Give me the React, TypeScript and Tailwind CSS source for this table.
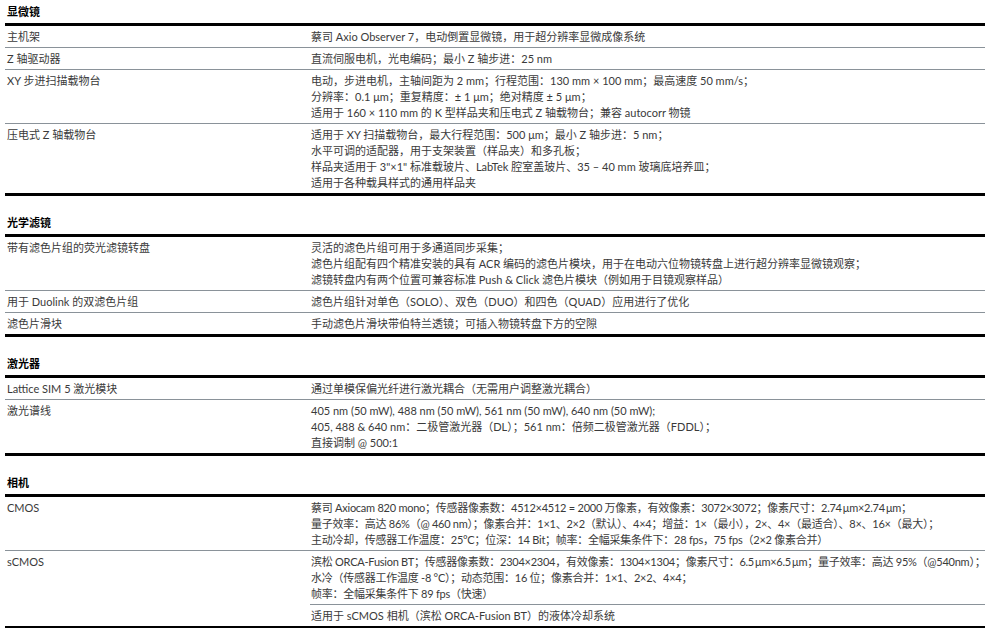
type Row = { label: string; lines: string[]; extra?: string };
type Section = { title: string; tight?: boolean; rows: Row[] };

const sections: Section[] = [
  {
    title: '显微镜',
    rows: [
      { label: '主机架', lines: ['蔡司 Axio Observer 7，电动倒置显微镜，用于超分辨率显微成像系统'] },
      { label: 'Z 轴驱动器', lines: ['直流伺服电机，光电编码；最小 Z 轴步进：25 nm'] },
      {
        label: 'XY 步进扫描载物台',
        lines: [
          '电动，步进电机，主轴间距为 2 mm；行程范围：130 mm × 100 mm；最高速度 50 mm/s；',
          '分辨率：0.1 μm；重复精度：± 1 μm；绝对精度 ± 5 μm；',
          '适用于 160 × 110 mm 的 K 型样品夹和压电式 Z 轴载物台；兼容 autocorr 物镜',
        ],
      },
      {
        label: '压电式 Z 轴载物台',
        lines: [
          '适用于 XY 扫描载物台，最大行程范围：500 μm；最小 Z 轴步进：5 nm；',
          '水平可调的适配器，用于支架装置（样品夹）和多孔板；',
          '样品夹适用于 3"×1" 标准载玻片、LabTek 腔室盖玻片、35 – 40 mm 玻璃底培养皿；',
          '适用于各种载具样式的通用样品夹',
        ],
      },
    ],
  },
  {
    title: '光学滤镜',
    rows: [
      {
        label: '带有滤色片组的荧光滤镜转盘',
        lines: [
          '灵活的滤色片组可用于多通道同步采集；',
          '滤色片组配有四个精准安装的具有 ACR 编码的滤色片模块，用于在电动六位物镜转盘上进行超分辨率显微镜观察；',
          '滤镜转盘内有两个位置可兼容标准 Push & Click 滤色片模块（例如用于目镜观察样品）',
        ],
      },
      { label: '用于 Duolink 的双滤色片组', lines: ['滤色片组针对单色（SOLO）、双色（DUO）和四色（QUAD）应用进行了优化'] },
      { label: '滤色片滑块', lines: ['手动滤色片滑块带伯特兰透镜；可插入物镜转盘下方的空隙'] },
    ],
  },
  {
    title: '激光器',
    rows: [
      { label: 'Lattice SIM 5 激光模块', lines: ['通过单模保偏光纤进行激光耦合（无需用户调整激光耦合）'] },
      {
        label: '激光谱线',
        lines: [
          '405 nm (50 mW), 488 nm (50 mW), 561 nm (50 mW), 640 nm (50 mW);',
          '405, 488 & 640 nm：二极管激光器（DL）；561 nm：倍频二极管激光器（FDDL）；',
          '直接调制 @ 500:1',
        ],
      },
    ],
  },
  {
    title: '相机',
    tight: true,
    rows: [
      {
        label: 'CMOS',
        lines: [
          '蔡司 Axiocam 820 mono；传感器像素数：4512×4512 = 2000 万像素，有效像素：3072×3072；像素尺寸：2.74\u2009μm×2.74\u2009μm；',
          '量子效率：高达 86%（@ 460 nm）；像素合并：1×1、2×2（默认）、4×4；增益：1×（最小），2×、4×（最适合）、8×、16×（最大）；',
          '主动冷却，传感器工作温度：25°C；位深：14 Bit；帧率：全幅采集条件下：28 fps，75 fps（2×2 像素合并）',
        ],
      },
      {
        label: 'sCMOS',
        lines: [
          '滨松 ORCA-Fusion BT；传感器像素数：2304×2304，有效像素：1304×1304；像素尺寸：6.5\u2009μm×6.5\u2009μm；量子效率：高达 95%（@540nm）；',
          '水冷（传感器工作温度 -8 °C）；动态范围：16 位；像素合并：1×1、2×2、4×4；',
          '帧率：全幅采集条件下 89 fps（快速）',
        ],
        extra: '适用于 sCMOS 相机（滨松 ORCA-Fusion BT）的液体冷却系统',
      },
    ],
  },
];

function SpecRow({ row, tight }: { row: Row; tight?: boolean }) {
  return (
    <div className="flex">
      <div className="w-[305px] shrink-0 pl-[2px] pt-[3px] pb-[2px]">{row.label}</div>
      <div className="flex-1 divide-y divide-[#8a9299]">
        <div className={tight ? 'pl-[1px] pt-[3px] pb-[2px] tracking-[-0.25px]' : 'pl-[1px] pt-[3px] pb-[2px]'}>
          {row.lines.map((l, i) => (
            <div key={i} className="whitespace-nowrap">{l}</div>
          ))}
        </div>
        {row.extra && <div className="pl-[1px] pt-[3px] pb-[2px]">{row.extra}</div>}
      </div>
    </div>
  );
}

export default function App() {
  return (
    <div className="w-[1000px] h-[628px] overflow-hidden bg-white px-[5px] font-['Lato','Noto_Sans_CJK_SC',sans-serif] text-[11px] leading-4 text-[#3a3a3a]">
      {sections.map((s, i) => (
        <div key={s.title} className={i > 0 ? 'mt-[15px] w-[980px]' : 'w-[980px]'}>
          <div className="pl-[2px] pt-[4px] pb-[3px] font-bold text-black">{s.title}</div>
          <div className="border-y-[3px] border-black divide-y divide-[#8a9299]">
            {s.rows.map((r) => (
              <SpecRow key={r.label} row={r} tight={s.tight} />
            ))}
          </div>
        </div>
      ))}
    </div>
  );
}
